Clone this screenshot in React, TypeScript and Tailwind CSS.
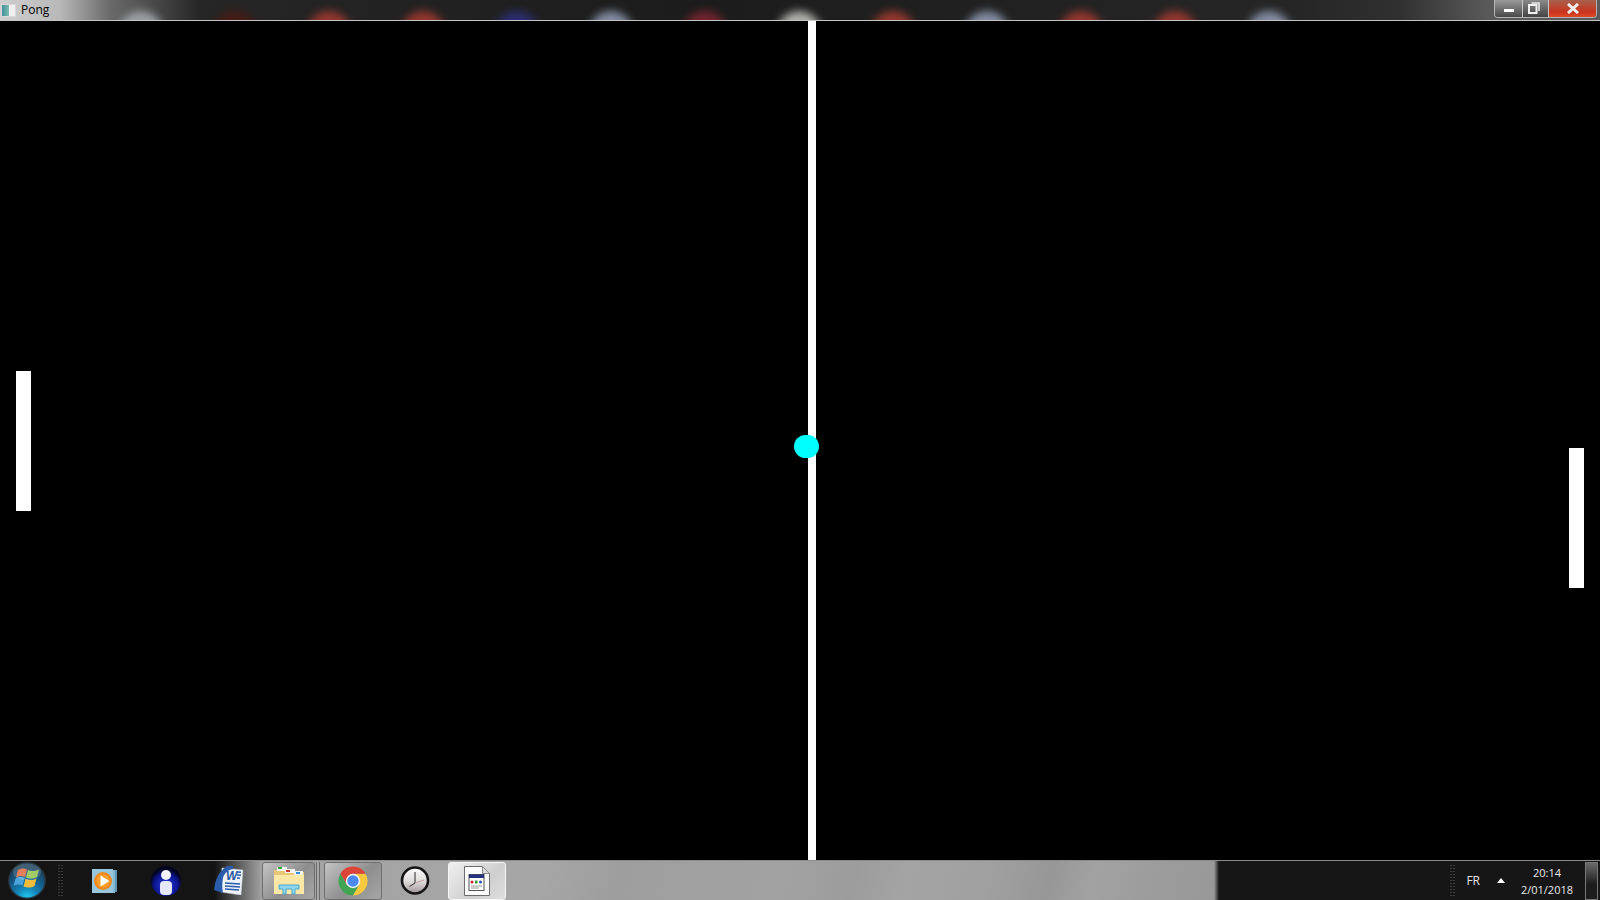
import React from 'react'

const blobs = [
  'bg-[#a4a8ae]', 'bg-[#4a1a14]', 'bg-[#a03a2e]', 'bg-[#a03a2e]', 'bg-[#2c2f78]', 'bg-[#8d99b0]',
  'bg-[#7c2430]', 'bg-[#c0c0bc]', 'bg-[#a03a2e]', 'bg-[#8d99b0]', 'bg-[#a03a2e]', 'bg-[#a03a2e]', 'bg-[#8d99b0]',
]

const Grip = () => (
  <div className="grid grid-cols-2 gap-x-[1px] gap-y-[2px] w-[5px]">
    {Array.from({ length: 22 }).map((_, i) => (
      <div key={i} className="w-[2px] h-[1px] bg-[#3c3c3c]" />
    ))}
  </div>
)

const WinOrb = () => (
  <svg width="38" height="37" viewBox="0 0 38 37">
    <defs>
      <radialGradient id="orb" cx="50%" cy="100%" r="85%">
        <stop offset="0%" stopColor="#1fd0f5" />
        <stop offset="35%" stopColor="#1585b8" />
        <stop offset="70%" stopColor="#145a86" />
        <stop offset="100%" stopColor="#1a3f5a" />
      </radialGradient>
    </defs>
    <ellipse cx="19" cy="18.500" rx="18.300" ry="17.800" fill="url(#orb)" stroke="#27343c" strokeWidth="1.400" />
    <path d="M10 8c3-2 6-2 9 -.5l-2 7.500c-3-1.500-6-1.500-9 .5z" fill="#e0653a" />
    <path d="M20 8c3 1.500 6 1.500 11 -.5l-2 7.500c-4 2-7 2-11 .5z" fill="#8fc24a" />
    <path d="M7.500 16.500c3-2 6-2 9-.5l-2 7.500c-3-1.500-6-1.500-9 .5z" fill="#4aa4dc" />
    <path d="M17.500 17c4 1.500 7 1.500 11 -.5l-2 7.500c-4 2-7 2-11 .5z" fill="#f0bd3a" />
    <ellipse cx="19" cy="10" rx="14" ry="8.500" fill="#fff" opacity="0.17" />
  </svg>
)

const MediaIcon = () => (
  <svg width="26" height="24" viewBox="0 0 26 24">
    <rect x="6" y="1" width="19" height="22" fill="#5c95b5" />
    <rect x="3" y="1" width="20" height="23" fill="#86b8d2" />
    <rect x="0" y="0" width="21" height="24" fill="#98c6dc" />
    <circle cx="11" cy="12" r="9" fill="#f08a1c" />
    <circle cx="11" cy="12" r="6.500" fill="#f5a02c" />
    <path d="M8.500 6.500l9 5.500-9 5.500z" fill="#fff" />
  </svg>
)

const PersonIcon = () => (
  <svg width="30" height="30" viewBox="0 0 30 30">
    <defs>
      <radialGradient id="blue" cx="50%" cy="65%" r="55%">
        <stop offset="0%" stopColor="#2a3ce0" />
        <stop offset="70%" stopColor="#0c1690" />
        <stop offset="100%" stopColor="#02041f" />
      </radialGradient>
    </defs>
    <circle cx="15" cy="15" r="15" fill="url(#blue)" />
    <circle cx="15" cy="9" r="5" fill="#f4f5ff" />
    <rect x="9" y="15" width="12" height="14" rx="4" fill="#e4e8fa" />
  </svg>
)

const WordIcon = () => (
  <svg width="32" height="29" viewBox="0 0 32 29">
    <path d="M9 2l21 2-2 25-20-3z" fill="#eef2f8" stroke="#c4ccd8" strokeWidth="0.500" />
    <path d="M1 24c1-9 4-18 13-24h6v3c-6 1-9 5-10 9-1 5-1 10 0 15z" fill="#2a5cab" />
    <text x="13" y="14" fontFamily="Liberation Sans, sans-serif" fontSize="12" fontWeight="700" fontStyle="italic" fill="#27579f">W</text>
    <path d="M12 17l15 1M12 20l15 1M12 23l14 1M24 6l4 .3M24 9l4 .3M24 12l3 .3" stroke="#2a5cab" strokeWidth="1.400" />
  </svg>
)

const FolderIcon = () => (
  <svg width="32" height="28" viewBox="0 0 32 28">
    <path d="M1 3h13l2 2h15v22H1z" fill="#e6c877" />
    <rect x="4" y="0" width="10" height="4" fill="#f4f4f0" />
    <rect x="5" y="0" width="4" height="2" fill="#2fae3a" />
    <rect x="12" y="2" width="10" height="4" fill="#f4f4f0" />
    <rect x="13" y="3" width="4" height="2" fill="#c8392b" />
    <rect x="21" y="4" width="9" height="4" fill="#f4f4f0" />
    <rect x="23" y="5" width="4" height="2" fill="#2c8fd0" />
    <path d="M1 8h30v19H1z" fill="#fbe7a6" />
    <path d="M6 18h20v4h-4v5h-3v-5h-6v5h-3v-5H6z" fill="#8ed6f2" stroke="#4aa6d0" strokeWidth="1" />
  </svg>
)

const ChromeIcon = () => (
  <svg width="30" height="30" viewBox="0 0 30 30">
    <path transform="rotate(240 15 15)" d="M27.560 7.750A14.500 14.500 0 0 0 2.440 7.750L8.940 18.500 15 7.750z" fill="#3fa552" />
    <path transform="rotate(120 15 15)" d="M27.560 7.750A14.500 14.500 0 0 0 2.440 7.750L8.940 18.500 15 7.750z" fill="#f8c93e" />
    <path d="M27.560 7.750A14.500 14.500 0 0 0 2.440 7.750L8.940 18.500 15 7.750z" fill="#db4437" />
    <circle cx="15" cy="15" r="7.200" fill="#f4f4f4" />
    <circle cx="15" cy="15" r="5.700" fill="#4a8af0" />
  </svg>
)

const ClockIcon = () => (
  <svg width="30" height="30" viewBox="0 0 30 30">
    <defs>
      <linearGradient id="face" x1="0" y1="0" x2="0" y2="1">
        <stop offset="0%" stopColor="#fdfdfd" />
        <stop offset="55%" stopColor="#dedada" />
        <stop offset="100%" stopColor="#a09498" />
      </linearGradient>
    </defs>
    <circle cx="15" cy="14.500" r="13" fill="url(#face)" stroke="#141416" strokeWidth="2.600" />
    <path d="M15 6V17L9.500 20.500" fill="none" stroke="#2a2a2a" strokeWidth="1" />
    <path d="M15 17l9-3" stroke="#b88c92" strokeWidth="0.800" />
  </svg>
)

const AppIcon = () => (
  <svg width="26" height="30" viewBox="0 0 26 30">
    <path d="M.5.5h18l7 7v22H.5z" fill="#fbfbfb" stroke="#6c6c6c" />
    <path d="M18.500.5v7h7z" fill="#dcdcdc" stroke="#8c8c8c" />
    <rect x="5" y="8.500" width="15" height="16" fill="#fff" stroke="#555" />
    <rect x="5" y="8.500" width="15" height="3.500" fill="#22327c" />
    <circle cx="8" cy="16" r="1.500" fill="#c8242a" />
    <rect x="11" y="14.500" width="2.500" height="3" fill="#2f9a3c" />
    <circle cx="16.500" cy="16" r="1.500" fill="#2c4fc0" />
    <path d="M7 20h11M7 22h8" stroke="#999" />
  </svg>
)

const TaskButton = ({ width, active, children }: { width: string; active?: boolean; children: React.ReactNode }) => (
  <div className={`${width} h-[38px] flex items-center justify-center rounded-[3px] border ${active ? 'bg-[linear-gradient(135deg,#f0f0f0,#cfcfcf_60%,#dedede)] border-[#f6f6f6]' : 'bg-[linear-gradient(135deg,#c4c4c4,#8e8e8e_55%,#a6a6a6)] border-[#6e6e6e]'}`}>
    {children}
  </div>
)

export default function App() {
  return (
    <div className="h-screen w-[1600px] flex flex-col bg-black overflow-hidden font-['Open_Sans',sans-serif]">
      {/* title bar */}
      <div className="h-[21px] shrink-0 relative overflow-hidden flex items-center border-b border-[#c4c4c4] bg-[linear-gradient(90deg,#cfcfcf_0px,#b8b8b8_60px,#6a6a6a_110px,#262626_200px,#1c1c1c_700px,#262626_1300px,#303030_1400px,#5a5a5a_1490px)]">
        <div className="absolute left-[119px] top-[11px] flex gap-[50px] blur-[4px] opacity-90">
          {blobs.map((c, i) => (
            <div key={i} className={`w-[44px] h-[30px] rounded-t-[22px] ${c}`} />
          ))}
        </div>
        <div className="relative ml-[1px] w-[15px] h-[13px] bg-[linear-gradient(90deg,#3f8f9c_0%,#7fc0b0_55%,#f0f0f0_55%)] border border-[#d8d8d8]" />
        <span className="relative ml-[5px] text-[12px] leading-none text-black">Pong</span>
        <div className="relative ml-auto mr-[3px] mb-[3px] w-[103px] h-[18px] flex rounded-b-[4px] border border-t-0 border-[#b4b4b4] overflow-hidden">
          <div className="w-[28px] flex items-center justify-center bg-[linear-gradient(180deg,#9a9a9a,#4a4a4a)] border-r border-[#c8c8c8]">
            <div className="w-[10px] h-[3px] mt-[5px] bg-white" />
          </div>
          <div className="w-[26px] flex items-center justify-center pr-[3px] bg-[linear-gradient(180deg,#8a8a8a,#444)] border-r border-[#c8c8c8]">
            <svg width="12" height="12" viewBox="0 0 12 12">
              <path d="M3.500 1h7.500v8" fill="none" stroke="#e8e8e8" strokeWidth="1.600" />
              <rect x="1" y="3" width="7.500" height="8" fill="none" stroke="#f0f0f0" strokeWidth="2" />
            </svg>
          </div>
          <div className="flex-1 flex items-center justify-center bg-[linear-gradient(180deg,#a8604e,#c8341c_70%,#e04a28)]">
            <svg width="14" height="11" viewBox="0 0 14 11">
              <path d="M2 1l10 9M12 1L2 10" stroke="#eee" strokeWidth="3" />
            </svg>
          </div>
        </div>
      </div>

      {/* game canvas */}
      <div className="flex-1 relative bg-black">
        <div className="absolute left-[808px] top-0 bottom-0 w-[8px] bg-white" />
        <div className="absolute left-[794px] top-[414px] w-[25px] h-[23px] rounded-full bg-[#00ffff]" />
        <div className="absolute left-[16px] top-[350px] w-[15px] h-[140px] bg-white" />
        <div className="absolute left-[1569px] top-[427px] w-[15px] h-[140px] bg-white" />
      </div>

      {/* taskbar */}
      <div className="h-[40px] shrink-0 flex items-center border-t border-[#8c8c8c] bg-[linear-gradient(90deg,#141414_0px,#141414_215px,transparent_262px,transparent_1214px,#161616_1219px),linear-gradient(105deg,#a0a0a0_0px,#a6a6a6_530px,#9e9e9e_600px,#a2a2a2_760px,#9c9c9c_830px,#a4a4a4_880px,#a0a0a0_960px,#979797_1020px,#a2a2a2_1060px,#9c9c9c_1120px,#969696_1215px)]">
        <div className="w-[46px] pl-[8px] flex items-center"><WinOrb /></div>
        <div className="ml-[12px] w-[5px]"><Grip /></div>
        <div className="ml-[29px] w-[26px]"><MediaIcon /></div>
        <div className="ml-[33px] w-[30px]"><PersonIcon /></div>
        <div className="ml-[32px] w-[32px]"><WordIcon /></div>
        <div className="ml-[17px]"><TaskButton width="w-[53px]"><FolderIcon /></TaskButton></div>
        <div className="ml-[1px] w-[4px] h-[38px] border-x border-[#6a6a6a] bg-[#a8a8a8]" />
        <div className="ml-[4px]"><TaskButton width="w-[58px]"><ChromeIcon /></TaskButton></div>
        <div className="ml-[18px] w-[30px]"><ClockIcon /></div>
        <div className="ml-[18px]"><TaskButton width="w-[58px]" active><AppIcon /></TaskButton></div>

        <div className="ml-auto mr-[2px] flex items-center h-full">
          <Grip />
          <span className="ml-[11px] text-[12px] text-[#e4e4e4]">FR</span>
          <svg className="ml-[17px]" width="8" height="5" viewBox="0 0 8 5"><path d="M4 0l4 5H0z" fill="#fff" /></svg>
          <div className="ml-[6px] w-[72px] flex flex-col items-center text-[11px] leading-[17px] text-[#e8e8e8]">
            <span>20:14</span>
            <span>2/01/2018</span>
          </div>
          <div className="ml-[2px] w-[13px] h-[38px] border border-[#777] bg-[linear-gradient(180deg,#6a6a6a,#1c1c1c_60%)]" />
        </div>
      </div>
    </div>
  )
}
